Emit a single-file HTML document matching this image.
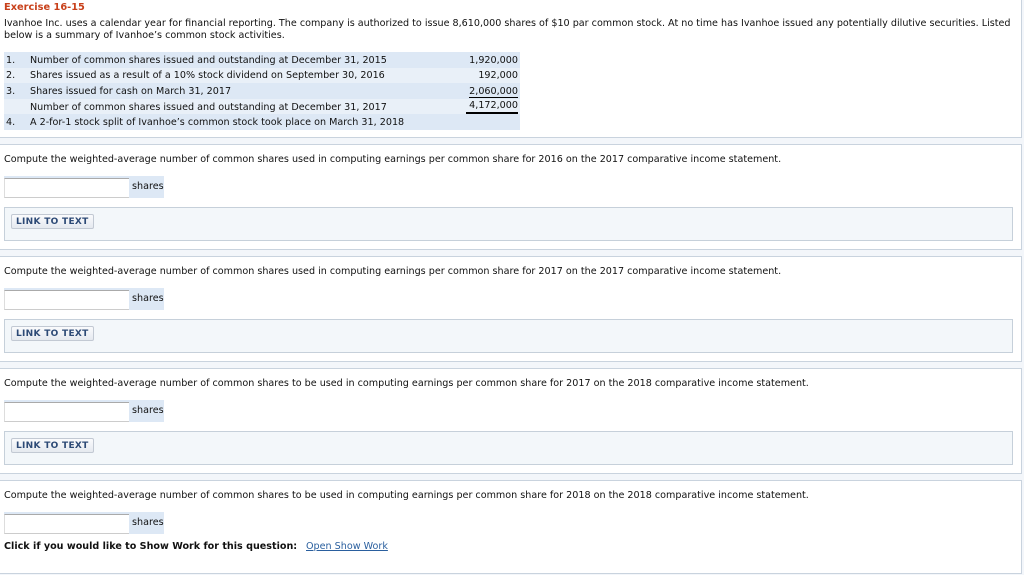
<!DOCTYPE html>
<html><head><meta charset="utf-8"><style>
*{margin:0;padding:0;box-sizing:border-box}
body{width:1024px;height:575px;background:#f3f6fa;font-family:"DejaVu Sans",Verdana,sans-serif;font-size:9.6px;color:#111;position:relative;overflow:hidden}
.p{position:absolute;left:0;width:1022px;background:#fff;border:1px solid #c9d3de;border-left:none}
.t{position:absolute;white-space:nowrap}
.in{position:absolute;left:4px;width:160px;height:22px;background:#dde8f5}
.in i{position:absolute;left:0;top:2px;width:125px;height:20px;background:#fff;border-top:1px solid #aaa;border-bottom:1px solid #ccc;border-left:1px solid #ddd}
.in span{position:absolute;left:128px;top:5px}
.lk{position:absolute;left:4px;width:1009px;height:34px;background:#f3f7fa;border:1px solid #c6d0da}
.lk b{position:absolute;left:6px;top:6px;height:15px;padding:2px 4px 0;font-size:9px;color:#2d4a76;background:linear-gradient(#fafbfd,#e5e9ef);border:1px solid #c2c9d3;border-radius:2px;letter-spacing:.3px}
table{position:absolute;left:4px;top:52px;width:516px;border-collapse:collapse}
td{height:15.6px;padding:1px 2px 0;white-space:nowrap}
tr:nth-child(odd){background:#dde8f5}tr:nth-child(even){background:#e9f0f8}
td.r{text-align:right}
</style></head><body>
<div class="p" style="top:-1px;height:139px;border-top:none"></div>
<div class="t" style="left:4px;top:2px;color:#c8401a;font-weight:bold;font-size:9.8px">Exercise 16-15</div>
<div class="t" style="left:4px;top:18px;line-height:12px">Ivanhoe Inc. uses a calendar year for financial reporting. The company is authorized to issue 8,610,000 shares of $10 par common stock. At no time has Ivanhoe issued any potentially dilutive securities. Listed<br>below is a summary of Ivanhoe’s common stock activities.</div>
<table>
<tr><td style="width:24px">1.</td><td>Number of common shares issued and outstanding at December 31, 2015</td><td class="r">1,920,000</td></tr>
<tr><td>2.</td><td>Shares issued as a result of a 10% stock dividend on September 30, 2016</td><td class="r">192,000</td></tr>
<tr><td>3.</td><td>Shares issued for cash on March 31, 2017</td><td class="r"><span style="border-bottom:1px solid #000">2,060,000</span></td></tr>
<tr><td></td><td>Number of common shares issued and outstanding at December 31, 2017</td><td class="r"><span style="border-bottom:2px solid #000;display:inline-block;line-height:12px;padding-left:3px">4,172,000</span></td></tr>
<tr><td>4.</td><td>A 2-for-1 stock split of Ivanhoe’s common stock took place on March 31, 2018</td><td></td></tr>
</table>

<div class="p" style="top:144px;height:106px"></div>
<div class="t" style="left:4px;top:154px">Compute the weighted-average number of common shares used in computing earnings per common share for 2016 on the 2017 comparative income statement.</div>
<div class="in" style="top:176px"><i></i><span>shares</span></div>
<div class="lk" style="top:207px"><b>LINK TO TEXT</b></div>

<div class="p" style="top:256px;height:106px"></div>
<div class="t" style="left:4px;top:266px">Compute the weighted-average number of common shares used in computing earnings per common share for 2017 on the 2017 comparative income statement.</div>
<div class="in" style="top:288px"><i></i><span>shares</span></div>
<div class="lk" style="top:319px"><b>LINK TO TEXT</b></div>

<div class="p" style="top:368px;height:106px"></div>
<div class="t" style="left:4px;top:378px">Compute the weighted-average number of common shares to be used in computing earnings per common share for 2017 on the 2018 comparative income statement.</div>
<div class="in" style="top:400px"><i></i><span>shares</span></div>
<div class="lk" style="top:431px"><b>LINK TO TEXT</b></div>

<div class="p" style="top:480px;height:94px"></div>
<div class="t" style="left:4px;top:490px">Compute the weighted-average number of common shares to be used in computing earnings per common share for 2018 on the 2018 comparative income statement.</div>
<div class="in" style="top:512px"><i></i><span>shares</span></div>
<div class="t" style="left:4px;top:541px;font-weight:bold">Click if you would like to Show Work for this question:</div>
<div class="t" style="left:306px;top:541px;color:#2a5f9e;text-decoration:underline">Open Show Work</div>
</body></html>
